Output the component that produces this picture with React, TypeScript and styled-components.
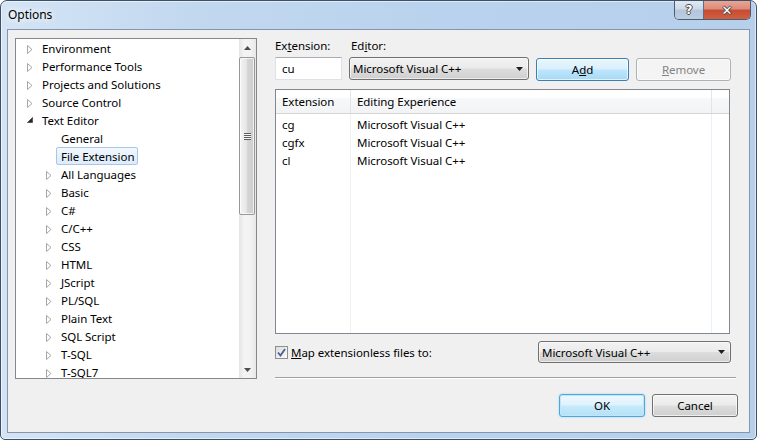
import styled, { createGlobalStyle } from "styled-components";

const GlobalStyle = createGlobalStyle`
  html, body {
    margin: 0;
    padding: 0;
    background: #ffffff;
  }
  body {
    font-family: "Noto Sans", "Open Sans", sans-serif;
    font-size: 11.5px;
    letter-spacing: -0.05px;
    color: #000;
  }
  * {
    box-sizing: border-box;
  }
`;

const Window = styled.div`
  width: 757px;
  height: 440px;
  border: 1px solid #3c5068;
  border-radius: 7px 7px 5px 5px;
  background: linear-gradient(90deg, #d4e4f5 0%, #c2d8ef 25%, #b9d2ed 60%, #b6cfeb 100%);
  box-shadow: inset 0 0 0 1px rgba(255, 255, 255, 0.55);
  display: flex;
  flex-direction: column;
  overflow: hidden;
`;

const TitleBar = styled.div`
  height: 28px;
  display: flex;
  align-items: flex-start;
  padding-left: 7px;
`;

const Title = styled.div`
  padding-top: 5px;
  line-height: 18px;
  font-size: 12px;
  text-shadow: 0 0 6px #fff, 0 0 10px #fff;
`;

const CaptionGroup = styled.div`
  margin-left: auto;
  margin-right: 5px;
  display: flex;
  height: 19px;
  border: 1px solid #4a5d75;
  border-top: none;
  border-radius: 0 0 5px 5px;
  overflow: hidden;
`;

const CaptionButton = styled.div<{ $close?: boolean }>`
  width: ${(p) => (p.$close ? 47 : 28)}px;
  height: 100%;
  display: flex;
  align-items: center;
  justify-content: center;
  font-family: "DejaVu Sans", sans-serif;
  font-weight: bold;
  font-size: ${(p) => (p.$close ? 13 : 12)}px;
  color: #fff;
  text-shadow: -1px 0 #4b4b4b, 1px 0 #4b4b4b, 0 -1px #4b4b4b, 0 1px #4b4b4b;
  background: ${(p) =>
    p.$close
      ? "linear-gradient(#e8a597 0%, #dd8a78 45%, #c74a32 50%, #d0603f 100%)"
      : "linear-gradient(#e1e9f3 0%, #cdd9e7 45%, #b4c6da 50%, #bccde0 100%)"};
  & + & {
    border-left: 1px solid #5b6e86;
  }
`;

const Client = styled.div`
  flex: 1;
  margin: 0 6px 6px 6px;
  border: 1px solid #8496ab;
  background: #f0f0f0;
  display: flex;
  align-items: flex-start;
  padding: 8px 11px 0 7px;
`;

/* ---------- tree ---------- */

const Tree = styled.div`
  width: 242px;
  height: 341px;
  border: 1px solid #828790;
  background: #fff;
  display: flex;
  margin-right: 18px;
`;

const TreeItems = styled.div`
  flex: 1;
  overflow: hidden;
`;

const TreeRow = styled.div<{ $level: number }>`
  height: 18px;
  display: flex;
  align-items: center;
  padding-left: ${(p) => 6 + p.$level * 19}px;
  white-space: nowrap;
`;

const Expander = styled.span`
  width: 15px;
  height: 18px;
  display: flex;
  align-items: center;
  padding-left: 5px;
  padding-top: 3px;
`;

const TreeLabel = styled.span<{ $selected?: boolean }>`
  height: 18px;
  line-height: 17px;
  padding: 0 3px 0 4px;
  border: 1px solid ${(p) => (p.$selected ? "#a8c7e8" : "transparent")};
  border-radius: 2px;
  background: ${(p) => (p.$selected ? "linear-gradient(#f1f7fd, #dcebfc)" : "transparent")};
`;

const ScrollBar = styled.div`
  width: 17px;
  display: flex;
  flex-direction: column;
  background: linear-gradient(90deg, #e4e4e4, #f4f4f4 30%, #f2f2f2 70%, #e8e8e8);
`;

const ScrollArrow = styled.div`
  height: 17px;
  display: flex;
  align-items: center;
  justify-content: center;
`;

const ScrollThumb = styled.div`
  height: 158px;
  margin: 1px 1px 0 0;
  border: 1px solid #979797;
  border-radius: 2px;
  background: linear-gradient(90deg, #f4f4f4 0%, #e6e6e6 45%, #d4d4d4 55%, #cfcfcf 100%);
  box-shadow: inset 0 0 0 1px rgba(255, 255, 255, 0.7);
  display: flex;
  align-items: center;
  justify-content: center;
`;

const Grip = styled.div`
  width: 7px;
  height: 7px;
  background: repeating-linear-gradient(#5c5c5c 0, #5c5c5c 1px, #f4f4f4 1px, #f4f4f4 2px);
`;

const ScrollSpacer = styled.div`
  flex: 1;
`;

/* ---------- right side ---------- */

const Panel = styled.div`
  width: 463px;
  display: flex;
  flex-direction: column;
`;

const FieldRow = styled.div`
  display: flex;
  gap: 7px;
`;

const Label = styled.div<{ $w: number; $indent?: number }>`
  width: ${(p) => p.$w}px;
  height: 16px;
  line-height: 16px;
  padding-left: ${(p) => p.$indent ?? 0}px;
`;

const TextBox = styled.div`
  width: 67px;
  height: 23px;
  border: 1px solid #dde2e8;
  border-top-color: #abadb3;
  background: #fff;
  padding-left: 6px;
  line-height: 21px;
`;

const Combo = styled.div<{ $w: number }>`
  width: ${(p) => p.$w}px;
  height: ${(p) => (p.$w > 185 ? 22 : 23)}px;
  border: 1px solid #707070;
  border-radius: 3px;
  background: linear-gradient(#f2f2f2 0%, #ebebeb 48%, #dddddd 52%, #cfcfcf 100%);
  box-shadow: inset 0 0 0 1px rgba(255, 255, 255, 0.6);
  display: flex;
  align-items: center;
  padding: 0 5px 0 3px;
  white-space: nowrap;
`;

const ComboText = styled.span`
  flex: 1;
`;

const Button = styled.div<{ $w: number; $variant?: "default" | "disabled" | "normal" }>`
  width: ${(p) => p.$w}px;
  height: 23px;
  border-radius: 3px;
  display: flex;
  align-items: center;
  justify-content: center;
  border: 1px solid
    ${(p) =>
      p.$variant === "default" ? "#3c7fb1" : p.$variant === "disabled" ? "#adb2b5" : "#707070"};
  color: ${(p) => (p.$variant === "disabled" ? "#838383" : "#000")};
  background: ${(p) =>
    p.$variant === "default"
      ? "linear-gradient(#eaf6fd 0%, #d9f0fc 48%, #bee6fd 52%, #a7d9f5 100%)"
      : p.$variant === "disabled"
      ? "#f4f4f4"
      : "linear-gradient(#f2f2f2 0%, #ebebeb 48%, #dddddd 52%, #cfcfcf 100%)"};
  box-shadow: inset 0 0 0 1px rgba(255, 255, 255, 0.65);
`;

const InputsRow = styled(FieldRow)`
  align-items: flex-start;
  margin-top: 3px;
  ${Button} {
    margin-top: 1px;
  }
`;

const ListView = styled.div`
  width: 455px;
  height: 245px;
  margin-top: 8px;
  border: 1px solid #828790;
  background: #fff;
  display: flex;
  flex-direction: column;
`;

const Columns = styled.div`
  display: grid;
  grid-template-columns: 75px 361px 1fr;
`;

const Header = styled(Columns)`
  height: 24px;
  background: linear-gradient(#ffffff 0%, #ffffff 35%, #f7f8f9 35%, #f2f3f4 100%);
  border-bottom: 1px solid #d5d5d5;
`;

const HeaderCell = styled.div<{ $last?: boolean }>`
  border-right: ${(p) => (p.$last ? "none" : "1px solid #e3e4e5")};
  padding-left: 6px;
  line-height: 23px;
  white-space: nowrap;
`;

const ListBody = styled.div`
  flex: 1;
  padding-top: 2px;
  background: linear-gradient(
    90deg,
    transparent 74px,
    #f0f0f0 74px,
    #f0f0f0 75px,
    transparent 75px,
    transparent 435px,
    #eaf0f8 435px,
    #eaf0f8 436px,
    transparent 436px
  );
`;

const ListRow = styled(Columns)`
  height: 18px;
  line-height: 18px;
`;

const Cell = styled.div`
  padding-left: 6px;
  white-space: nowrap;
`;

const MapRow = styled.div`
  margin-top: 7px;
  display: flex;
  align-items: center;
  padding-right: 7px;
`;

const CheckBox = styled.div`
  width: 13px;
  height: 13px;
  border: 1px solid #8e8f8f;
  background: linear-gradient(135deg, #dcdcdc, #fbfbfb);
  display: flex;
  align-items: center;
  justify-content: center;
  margin-right: 3px;
  margin-top: 1px;
`;

const CheckLabel = styled.span`
  flex: 1;
`;

const Separator = styled.div`
  margin-top: 14px;
  width: 461px;
  height: 2px;
  border-top: 1px solid #a0a0a0;
  border-bottom: 1px solid #ffffff;
`;

const ButtonRow = styled.div`
  margin-top: 15px;
  display: flex;
  justify-content: flex-end;
  gap: 7px;
`;

const OkButton = styled(Button)`
  border-color: #4fa6d8;
  background: linear-gradient(#eef8fe 0%, #dff2fd 48%, #c7eafc 52%, #b5e0f6 100%);
  box-shadow: inset 0 0 0 1px #bfe6fb, 0 0 2px #8fd0f3;
`;

/* ---------- drawings ---------- */

const Collapsed = () => (
  <svg width="6" height="9" viewBox="0 0 6 9">
    <path d="M0.5 0.5 L5 4.5 L0.5 8.5 Z" fill="#fff" stroke="#a6a6a6" strokeWidth="1" />
  </svg>
);

const Expanded = () => (
  <svg width="6" height="6" viewBox="0 0 6 6" style={{ marginTop: -4 }}>
    <path d="M5.5 0.5 L5.5 5.5 L0.5 5.5 Z" fill="#262626" stroke="#595959" strokeWidth="1" />
  </svg>
);

const DownArrow = () => (
  <svg width="7" height="4" viewBox="0 0 7 4">
    <path d="M0 0 H7 L3.5 4 Z" fill="#1f1f1f" />
  </svg>
);

const UpArrow = () => (
  <svg width="7" height="4" viewBox="0 0 7 4">
    <path d="M0 4 H7 L3.5 0 Z" fill="#4d4d4d" />
  </svg>
);

const ScrollDown = () => (
  <svg width="7" height="4" viewBox="0 0 7 4">
    <path d="M0 0 H7 L3.5 4 Z" fill="#4d4d4d" />
  </svg>
);

const Tick = () => (
  <svg width="9" height="9" viewBox="0 0 9 9">
    <path d="M1 4.5 L3.5 7.5 L8 1" fill="none" stroke="#4a5f97" strokeWidth="1.8" />
  </svg>
);

type Node = { label: string; level: number; state?: "collapsed" | "expanded"; selected?: boolean };

const nodes: Node[] = [
  { label: "Environment", level: 0, state: "collapsed" },
  { label: "Performance Tools", level: 0, state: "collapsed" },
  { label: "Projects and Solutions", level: 0, state: "collapsed" },
  { label: "Source Control", level: 0, state: "collapsed" },
  { label: "Text Editor", level: 0, state: "expanded" },
  { label: "General", level: 1 },
  { label: "File Extension", level: 1, selected: true },
  { label: "All Languages", level: 1, state: "collapsed" },
  { label: "Basic", level: 1, state: "collapsed" },
  { label: "C#", level: 1, state: "collapsed" },
  { label: "C/C++", level: 1, state: "collapsed" },
  { label: "CSS", level: 1, state: "collapsed" },
  { label: "HTML", level: 1, state: "collapsed" },
  { label: "JScript", level: 1, state: "collapsed" },
  { label: "PL/SQL", level: 1, state: "collapsed" },
  { label: "Plain Text", level: 1, state: "collapsed" },
  { label: "SQL Script", level: 1, state: "collapsed" },
  { label: "T-SQL", level: 1, state: "collapsed" },
  { label: "T-SQL7", level: 1, state: "collapsed" },
];

const mappings = [
  { ext: "cg", editor: "Microsoft Visual C++" },
  { ext: "cgfx", editor: "Microsoft Visual C++" },
  { ext: "cl", editor: "Microsoft Visual C++" },
];

const App = () => {
  return (
    <>
      <GlobalStyle />
      <Window>
        <TitleBar>
          <Title>Options</Title>
          <CaptionGroup>
            <CaptionButton>?</CaptionButton>
            <CaptionButton $close>✕</CaptionButton>
          </CaptionGroup>
        </TitleBar>

        <Client>
          <Tree>
            <TreeItems>
              {nodes.map((n) => (
                <TreeRow key={n.label} $level={n.level}>
                  <Expander>
                    {n.state === "collapsed" && <Collapsed />}
                    {n.state === "expanded" && <Expanded />}
                  </Expander>
                  <TreeLabel $selected={n.selected}>{n.label}</TreeLabel>
                </TreeRow>
              ))}
            </TreeItems>
            <ScrollBar>
              <ScrollArrow>
                <UpArrow />
              </ScrollArrow>
              <ScrollThumb>
                <Grip />
              </ScrollThumb>
              <ScrollSpacer />
              <ScrollArrow>
                <ScrollDown />
              </ScrollArrow>
            </ScrollBar>
          </Tree>

          <Panel>
            <FieldRow>
              <Label $w={67}>
                Ex<u>t</u>ension:
              </Label>
              <Label $w={180} $indent={2}>
                Ed<u>i</u>tor:
              </Label>
            </FieldRow>
            <InputsRow>
              <TextBox>cu</TextBox>
              <Combo $w={180}>
                <ComboText>Microsoft Visual C++</ComboText>
                <DownArrow />
              </Combo>
              <Button $w={93} $variant="default">
                A<u>d</u>d
              </Button>
              <Button $w={95} $variant="disabled">
                <u>R</u>emove
              </Button>
            </InputsRow>

            <ListView>
              <Header>
                <HeaderCell>Extension</HeaderCell>
                <HeaderCell>Editing Experience</HeaderCell>
                <HeaderCell $last />
              </Header>
              <ListBody>
                {mappings.map((m) => (
                  <ListRow key={m.ext}>
                    <Cell>{m.ext}</Cell>
                    <Cell>{m.editor}</Cell>
                    <Cell />
                  </ListRow>
                ))}
              </ListBody>
            </ListView>

            <MapRow>
              <CheckBox>
                <Tick />
              </CheckBox>
              <CheckLabel>
                <u>M</u>ap extensionless files to:
              </CheckLabel>
              <Combo $w={193}>
                <ComboText>Microsoft Visual C++</ComboText>
                <DownArrow />
              </Combo>
            </MapRow>

            <Separator />

            <ButtonRow>
              <OkButton $w={86}>OK</OkButton>
              <Button $w={86}>Cancel</Button>
            </ButtonRow>
          </Panel>
        </Client>
      </Window>
    </>
  );
};

export default App;
